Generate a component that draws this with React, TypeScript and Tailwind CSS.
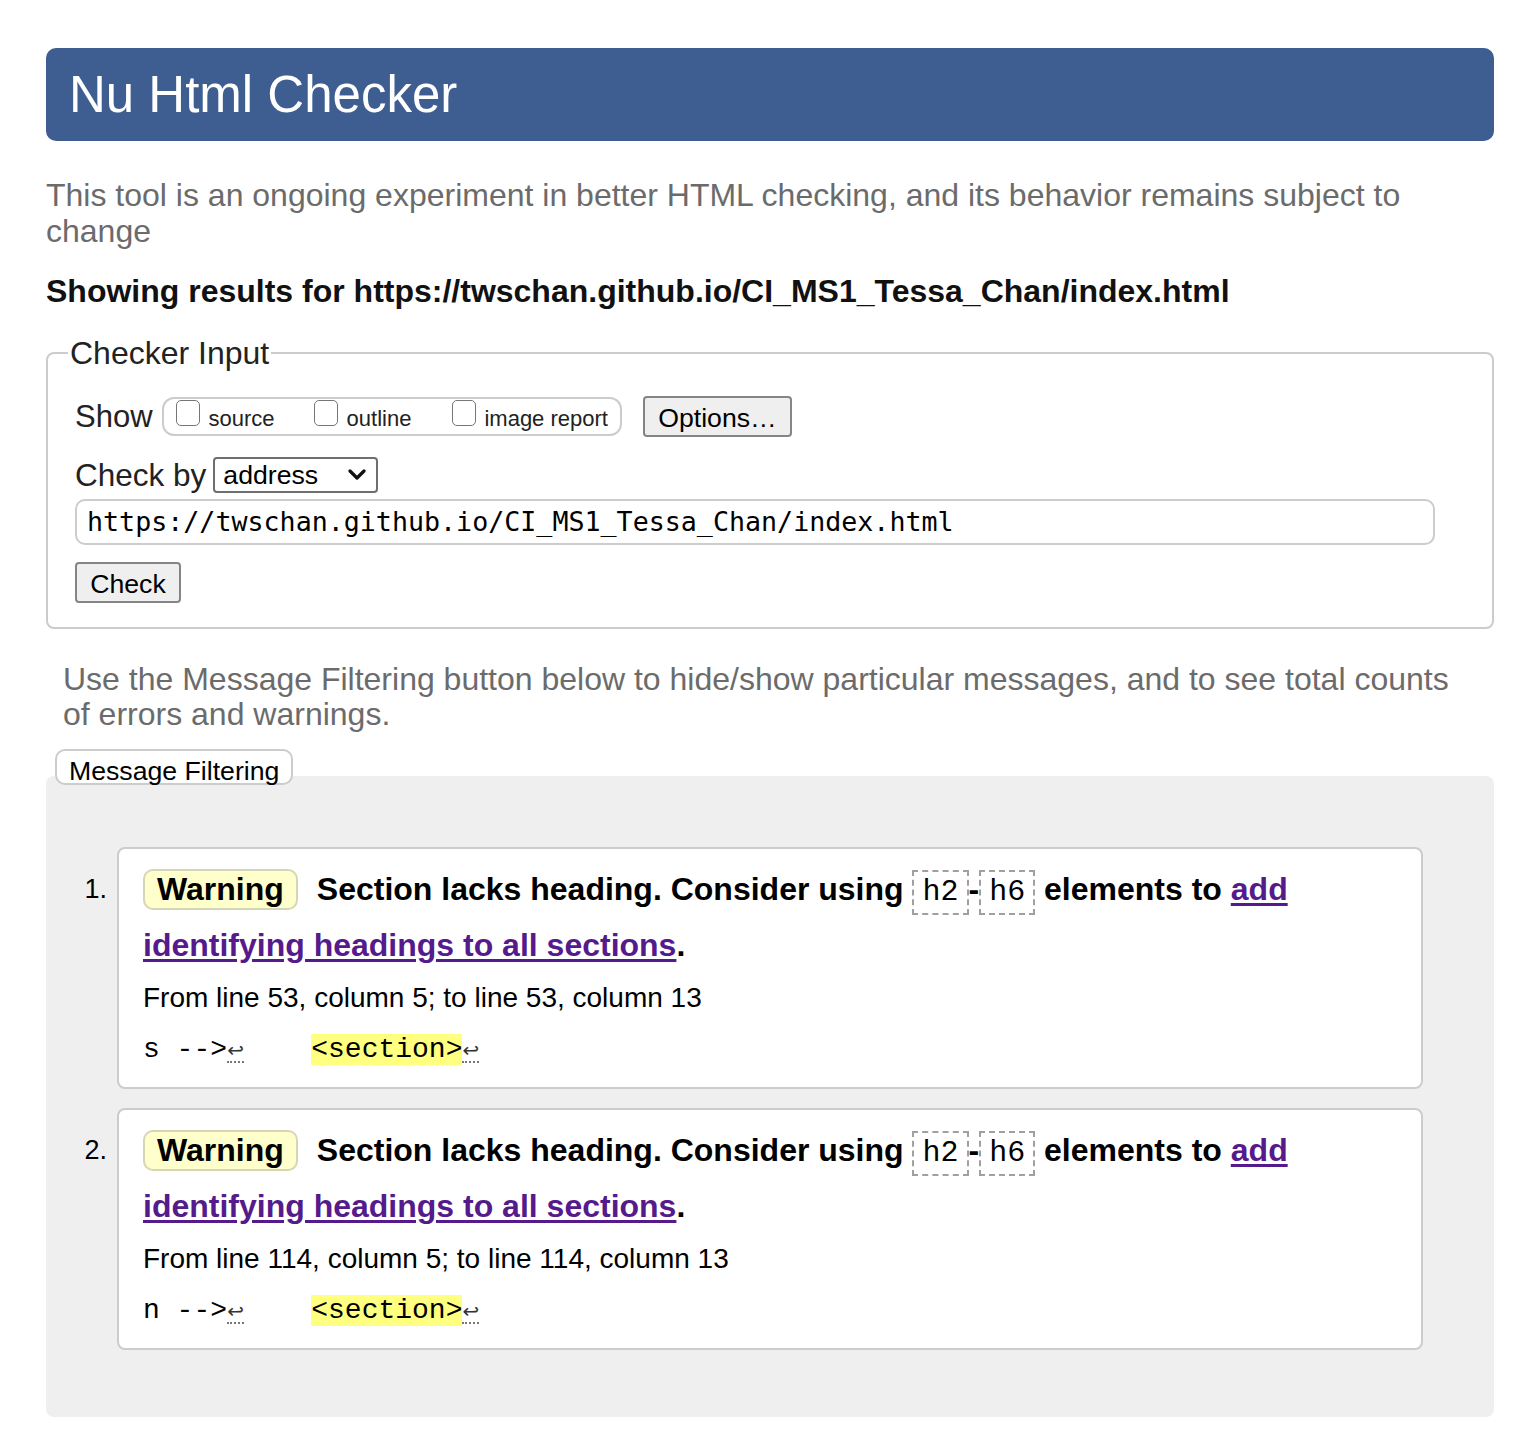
import React from 'react';

const messages = [
  { n: 1, from: 'From line 53, column 5; to line 53, column 13', lead: 's -->' },
  { n: 2, from: 'From line 114, column 5; to line 114, column 13', lead: 'n -->' },
];

function CodeBox({ children }: { children: React.ReactNode }) {
  return (
    <code className="inline-block border-2 border-dashed border-[#a0a0a0] px-[8px] leading-[41px] font-['Liberation_Mono','Courier_New',monospace] text-[30px] font-normal">
      {children}
    </code>
  );
}

function Ret() {
  return (
    <span className="inline-block w-[17px] text-center leading-[22px] border-b-2 border-dotted border-[#777] text-[20px] font-['DejaVu_Sans',sans-serif] text-[#333]">
      ↩
    </span>
  );
}

function Checkbox() {
  return <span className="inline-block w-[24px] h-[26px] rounded-[5px] border-[1.5px] border-[#767676] bg-white self-start mt-[1px]" />;
}

function Message({ n, from, lead }: { n: number; from: string; lead: string }) {
  return (
    <li className="flex">
      <span className="w-[71px] shrink-0 text-right pr-[10px] pt-[14px] text-[27px] leading-[56px]">{n}.</span>
      <div className="flex-1 bg-white border-2 border-[#cccccc] rounded-[8px] pl-[24px] pr-[20px] pt-[12px] pb-[24px]">
        <p className="text-[32px] font-bold leading-[56px] text-black">
          <strong className="inline-block bg-[#ffffcc] border-2 border-[#d6d6b4] rounded-[10px] px-[12px] leading-[37px] mr-[19px]">
            Warning
          </strong>
          Section lacks heading. Consider using <CodeBox>h2</CodeBox>-<CodeBox>h6</CodeBox> elements to{' '}
          <a className="text-[#551a8b] underline underline-offset-[3px]" href="#">
            add identifying headings to all sections
          </a>
          .
        </p>
        <p className="mt-[12px] text-[28px] leading-[26px] text-black">{from}</p>
        <p className="mt-[26px] text-[28px] leading-[26px] whitespace-pre font-['Liberation_Mono','Courier_New',monospace] text-black">
          {lead}
          <Ret />
          {'    '}
          <span className="bg-[#ffff80]">{'<section>'}</span>
          <Ret />
        </p>
      </div>
    </li>
  );
}

export default function App() {
  return (
    <div className="min-h-screen bg-white px-[46px] pt-[48px] pb-[29px] text-[#222] font-['Liberation_Sans',Arial,sans-serif]">
      {/* header */}
      <header className="h-[93px] rounded-[10px] bg-[#3e5e91] px-[23px] flex items-center">
        <h1 className="text-[51px] text-white leading-none">Nu Html Checker</h1>
      </header>

      <p className="mt-[36px] text-[32px] leading-[36px] text-[#6b6b6b]">
        This tool is an ongoing experiment in better HTML checking, and its behavior remains subject to change
      </p>

      <p className="mt-[24px] text-[32px] leading-[36px] font-bold text-[#111]">
        Showing results for https://twschan.github.io/CI_MS1_Tessa_Chan/index.html
      </p>

      {/* checker input */}
      <fieldset className="mt-[26px] border-2 border-[#cccccc] rounded-[8px] px-[20px] pb-[24px]">
        <legend className="px-[2px] text-[32px] leading-[36px] text-[#222]">Checker Input</legend>
        <div className="ml-[7px]">
          <div className="mt-[25px] flex items-center h-[41px]">
            <span className="text-[31px] leading-[36px]">Show</span>
            <div className="ml-[9px] h-[39px] flex items-center border-2 border-[#cccccc] rounded-[12px] px-[12px] text-[22px]">
              <Checkbox />
              <span className="ml-[9px] mr-[39px] pt-[4px]">source</span>
              <Checkbox />
              <span className="ml-[9px] mr-[41px] pt-[4px]">outline</span>
              <Checkbox />
              <span className="ml-[8px] pt-[4px]">image report</span>
            </div>
            <button className="ml-[21px] h-[41px] w-[149px] bg-[#efefef] border-2 border-[#858585] rounded-[4px] text-[26.67px] text-black">
              Options…
            </button>
          </div>

          <div className="mt-[20px] flex items-center">
            <span className="text-[31.5px] leading-[36px]">Check by</span>
            <div className="ml-[7px] w-[165px] h-[36px] border-2 border-[#6f6f6f] rounded-[4px] pl-[8px] pr-[10px] flex items-center justify-between text-[26.67px] text-black">
              <span>address</span>
              <svg width="18" height="12" viewBox="0 0 18 12" fill="none">
                <polyline points="2,2 9,9 16,2" stroke="#111" strokeWidth="3.2" strokeLinecap="round" strokeLinejoin="round" />
              </svg>
            </div>
          </div>

          <div className="mt-[6px] w-[1360px] h-[46px] border-2 border-[#cccccc] rounded-[10px] px-[10px] flex items-center font-['DejaVu_Sans_Mono',monospace] text-[26.67px] text-black">
            https://twschan.github.io/CI_MS1_Tessa_Chan/index.html
          </div>

          <button className="mt-[17px] h-[41px] w-[106px] bg-[#efefef] border-2 border-[#858585] rounded-[4px] text-[26.67px] text-black">
            Check
          </button>
        </div>
      </fieldset>

      <p className="mt-[33px] pl-[17px] pr-[40px] text-[32px] leading-[35px] text-[#6b6b6b]">
        Use the Message Filtering button below to hide/show particular messages, and to see total counts of errors and warnings.
      </p>

      <button className="relative z-10 mt-[17px] ml-[9px] h-[36px] px-[12px] bg-white border-2 border-[#cccccc] rounded-[10px] text-[26.67px] text-black">
        Message Filtering
      </button>

      {/* results */}
      <div className="-mt-[11px] bg-[#efefef] rounded-[8px] pt-[71px] pb-[67px] pr-[71px]">
        <ol className="flex flex-col gap-[19px] text-black">
          {messages.map((m) => (
            <Message key={m.n} {...m} />
          ))}
        </ol>
      </div>
    </div>
  );
}
